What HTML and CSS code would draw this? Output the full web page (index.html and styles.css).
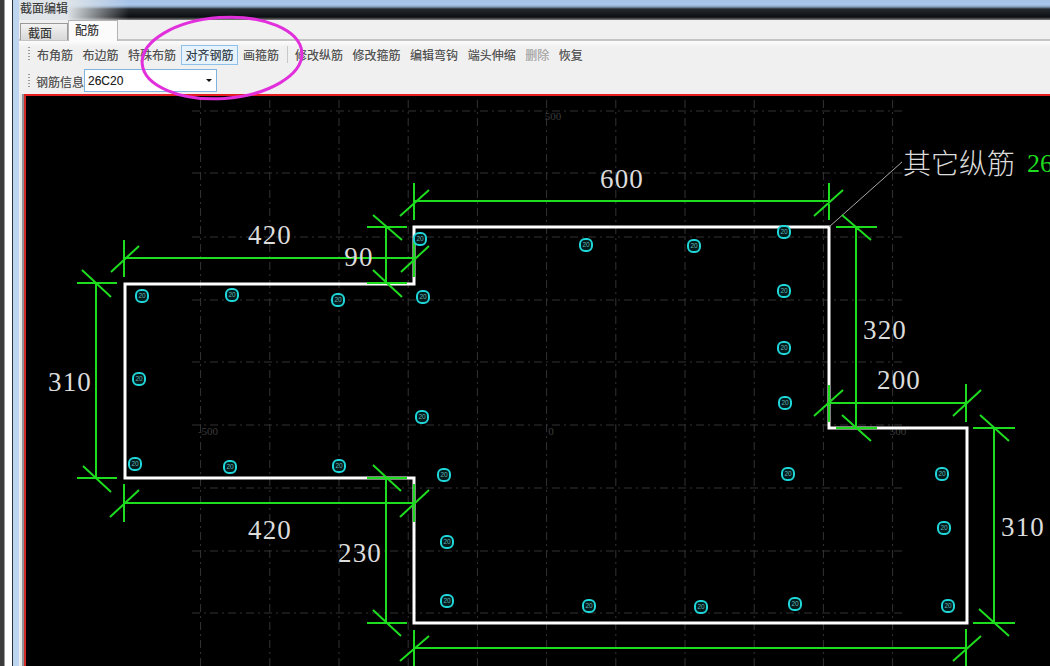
FILE: index.html
```html
<!DOCTYPE html>
<html lang="zh">
<head>
<meta charset="utf-8">
<title>截面编辑</title>
<link rel="stylesheet" href="styles.css">
</head>
<body>
<div class="desk"></div>
<main class="window">
  <header class="title">截面编辑</header>
  <nav class="tabs">
    <span class="tab">截面</span>
    <span class="tab tab-active">配筋</span>
  </nav>
  <div class="toolbar toolbar-main">
    <i class="grip"></i>
    <span class="tool">布角筋</span>
    <span class="tool">布边筋</span>
    <span class="tool">特殊布筋</span>
    <span class="tool tool-active">对齐钢筋</span>
    <span class="tool">画箍筋</span>
    <i class="sep"></i>
    <span class="tool">修改纵筋</span>
    <span class="tool">修改箍筋</span>
    <span class="tool">编辑弯钩</span>
    <span class="tool">端头伸缩</span>
    <span class="tool tool-off">删除</span>
    <span class="tool">恢复</span>
  </div>
  <div class="toolbar toolbar-info">
    <i class="grip"></i>
    <label class="info-label">钢筋信息</label>
    <div class="combo"><span>26C20</span><i class="arrow"></i></div>
  </div>
  <div class="canvas">
    <svg class="drawing" width="1024" height="570" viewBox="26 96 1024 570" xmlns="http://www.w3.org/2000/svg">
      <path class="grid" d="M200.6 100V666M269.8 100V666M339 100V666M408.2 100V666M477.4 100V666M546.6 100V666M615.8 100V666M685 100V666M754.2 100V666M823.4 100V666M892.6 100V666M192 111H902M192 173H902M192 237H902M192 300H902M192 362H902M192 425H902M192 488H902M192 551H902M192 613H902"/>
      <g class="grid-label">
        <text x="553" y="120" text-anchor="middle">500</text>
        <text x="208" y="435" text-anchor="middle">-500</text>
        <text x="551" y="435" text-anchor="middle">0</text>
        <text x="898" y="435" text-anchor="middle">500</text>
      </g>
      <path class="outline" d="M125 284H414V227H829V428H967V623H414V478H125Z"/>
      <path class="leader" d="M829 227L902 162"/>
      <path class="dim" d="M414 201H829M414 183V220M400 216L429 190M829 183V220M814 216L843 190
        M856 227V428M836 227H877M842 215L871 240M836 428H877M842 415L871 441
        M829 403H967M829 385V422M814 416L843 390M966 384V422M953 416L981 390
        M994 428V623M973 428H1015M980 415L1009 441M973 623H1015M979 609L1009 636
        M414 648H967M966 629V666M953 661L981 636M414 630V666M400 661L429 636
        M124 258H414M124 240V277M111 272L139 246M414 240V277M401 272L429 246
        M386 227V284M367 227H407M373 215L402 240M367 283H407M373 270L402 297
        M96 284V478M77 283H117M82 270L111 297M77 478H117M83 466L111 492
        M124 503H414M124 484V522M110 517L139 490M414 484V522M400 517L429 490
        M386 478V623M367 478H407M373 465L401 491M367 623H407M373 610L401 636"/>
      <g class="dim-text">
        <text x="622" y="188">600</text>
        <text x="270" y="244">420</text>
        <text x="359" y="266">90</text>
        <text x="70" y="391">310</text>
        <text x="885" y="339">320</text>
        <text x="899" y="389">200</text>
        <text x="1023" y="536">310</text>
        <text x="270" y="539">420</text>
        <text x="360" y="562">230</text>
      </g>
      <text class="note" x="903" y="174">其它纵筋</text>
      <text class="note-code" x="1027" y="172">26C20</text>
      <g class="bars">
        <g transform="translate(420 239)"><rect x="-6" y="-6" width="12" height="12" rx="5"/><text y="2">20</text></g>
        <g transform="translate(586 245)"><rect x="-6" y="-6" width="12" height="12" rx="5"/><text y="2">20</text></g>
        <g transform="translate(694 246)"><rect x="-6" y="-6" width="12" height="12" rx="5"/><text y="2">20</text></g>
        <g transform="translate(784 232)"><rect x="-6" y="-6" width="12" height="12" rx="5"/><text y="2">20</text></g>
        <g transform="translate(784 291)"><rect x="-6" y="-6" width="12" height="12" rx="5"/><text y="2">20</text></g>
        <g transform="translate(784 348)"><rect x="-6" y="-6" width="12" height="12" rx="5"/><text y="2">20</text></g>
        <g transform="translate(785 403)"><rect x="-6" y="-6" width="12" height="12" rx="5"/><text y="2">20</text></g>
        <g transform="translate(142 296)"><rect x="-6" y="-6" width="12" height="12" rx="5"/><text y="2">20</text></g>
        <g transform="translate(232 295)"><rect x="-6" y="-6" width="12" height="12" rx="5"/><text y="2">20</text></g>
        <g transform="translate(338 300)"><rect x="-6" y="-6" width="12" height="12" rx="5"/><text y="2">20</text></g>
        <g transform="translate(423 297)"><rect x="-6" y="-6" width="12" height="12" rx="5"/><text y="2">20</text></g>
        <g transform="translate(139 379)"><rect x="-6" y="-6" width="12" height="12" rx="5"/><text y="2">20</text></g>
        <g transform="translate(422 417)"><rect x="-6" y="-6" width="12" height="12" rx="5"/><text y="2">20</text></g>
        <g transform="translate(135 464)"><rect x="-6" y="-6" width="12" height="12" rx="5"/><text y="2">20</text></g>
        <g transform="translate(230 467)"><rect x="-6" y="-6" width="12" height="12" rx="5"/><text y="2">20</text></g>
        <g transform="translate(339 466)"><rect x="-6" y="-6" width="12" height="12" rx="5"/><text y="2">20</text></g>
        <g transform="translate(444 475)"><rect x="-6" y="-6" width="12" height="12" rx="5"/><text y="2">20</text></g>
        <g transform="translate(788 474)"><rect x="-6" y="-6" width="12" height="12" rx="5"/><text y="2">20</text></g>
        <g transform="translate(942 474)"><rect x="-6" y="-6" width="12" height="12" rx="5"/><text y="2">20</text></g>
        <g transform="translate(944 528)"><rect x="-6" y="-6" width="12" height="12" rx="5"/><text y="2">20</text></g>
        <g transform="translate(447 542)"><rect x="-6" y="-6" width="12" height="12" rx="5"/><text y="2">20</text></g>
        <g transform="translate(447 601)"><rect x="-6" y="-6" width="12" height="12" rx="5"/><text y="2">20</text></g>
        <g transform="translate(589 606)"><rect x="-6" y="-6" width="12" height="12" rx="5"/><text y="2">20</text></g>
        <g transform="translate(701 607)"><rect x="-6" y="-6" width="12" height="12" rx="5"/><text y="2">20</text></g>
        <g transform="translate(795 604)"><rect x="-6" y="-6" width="12" height="12" rx="5"/><text y="2">20</text></g>
        <g transform="translate(948 606)"><rect x="-6" y="-6" width="12" height="12" rx="5"/><text y="2">20</text></g>
      </g>
    </svg>
  </div>
</main>
<svg class="annotation" width="1050" height="666" viewBox="0 0 1050 666" xmlns="http://www.w3.org/2000/svg">
  <ellipse cx="222" cy="58" rx="80" ry="40.5" transform="rotate(-4 222 58)"/>
</svg>
</body>
</html>
```

FILE: styles.css
```css
* { box-sizing: border-box; }
html, body { margin: 0; height: 100%; }
body {
  position: relative;
  display: flex;
  width: 1050px;
  height: 666px;
  overflow: hidden;
  background: #fff;
  font-family: "Noto Sans CJK SC", "Liberation Sans", sans-serif;
  font-size: 12px;
  color: #4c4c4c;
}
.desk {
  flex: 0 0 13px;
  background: linear-gradient(90deg, #3b3b3b 0, #3b3b3b 4px, #fff 5px, #fff 12px, #2b2f36 12px);
}
.window {
  flex: 1;
  min-width: 0;
  display: flex;
  flex-direction: column;
  border-left: 6px solid #bed5ef;
  background: #f0f0f0;
}
.title {
  height: 20px;
  flex: none;
  padding-left: 1px;
  font-size: 12px;
  line-height: 16px;
  color: #3a3a3a;
  background:
    linear-gradient(90deg, #dfe4e8 0, #dfe4e8 48px, rgba(223,228,232,0) 110px),
    linear-gradient(180deg, #a6c3e6 0, #a9c7ea 5px, #7d97b4 7px, #262b30 9px, #0b0e11 17px, #555 19px, #8a8a8a 20px);
}
.title, .tab, .tool, .info-label, .combo span { text-shadow: 0 0 .6px rgba(120,120,120,.6); }
.tabs {
  height: 21px;
  flex: none;
  display: flex;
  align-items: flex-end;
  padding-left: 1px;
  border-bottom: 2px solid #c4c4c4;
}
.tab {
  width: 48px;
  height: 17px;
  margin-bottom: -1px;
  padding-left: 7px;
  line-height: 17px;
  color: #333;
  border: 1px solid #9a9a9a;
  border-bottom: 0;
  background: linear-gradient(180deg, #f2f2f2, #d8d8d8);
}
.tab-active {
  width: 50px;
  height: 21px;
  margin-bottom: -2px;
  padding-left: 6px;
  line-height: 18px;
  background: #fbfbfb;
  border-color: #b4b4b4;
}
.toolbar {
  flex: none;
  display: flex;
  align-items: center;
  padding-left: 9px;
}
.toolbar-main { height: 27px; background: linear-gradient(180deg, #fcfcfc, #f0f0f0 6px); }
.toolbar-info { height: 26px; }
.grip {
  width: 2px;
  height: 15px;
  margin-right: 2.25px;
  background: repeating-linear-gradient(180deg, #9a9a9a 0, #9a9a9a 1px, transparent 1px, transparent 3px);
}
.tool {
  height: 20px;
  padding: 0 3.75px;
  line-height: 18px;
  white-space: nowrap;
  border: 1px solid transparent;
}
.tool-active {
  color: #2d3a48;
  border-color: #8fc0ea;
  background: #e6f2fc;
}
.tool-off { color: #adadad; }
.sep {
  width: 1px;
  height: 17px;
  margin: 0 2.75px;
  background: #c8c8c8;
}
.info-label { margin-left: 3.75px; width: 48px; white-space: nowrap; }
.combo {
  width: 133px;
  height: 23px;
  display: flex;
  align-items: center;
  justify-content: space-between;
  padding: 0 4px 0 3px;
  margin-top: -1px;
  font-family: "Liberation Sans", sans-serif;
  font-size: 12px;
  color: #222;
  background: #fff;
  border: 1px solid #7fb4e2;
}
.arrow {
  width: 0;
  height: 0;
  border-left: 3px solid transparent;
  border-right: 3px solid transparent;
  border-top: 3px solid #111;
}
.canvas {
  flex: 1;
  min-height: 0;
  margin-left: 5px;
  background: #000;
  border-left: 2px solid #d42a2a;
  border-top: 2px solid #e62020;
  box-shadow: -2px 0 0 #8f9296, -4px 0 0 #e4e6e8;
  overflow: hidden;
}
.drawing { display: block; }
.grid {
  fill: none;
  stroke: #333;
  stroke-width: 1;
  stroke-dasharray: 8 4 2 4;
}
.grid-label {
  font-family: "Liberation Serif", serif;
  font-size: 11px;
  fill: #3c3c3c;
}
.outline {
  fill: none;
  stroke: #fff;
  stroke-width: 3;
}
.leader {
  fill: none;
  stroke: #a8a8a8;
  stroke-width: 1;
}
.dim {
  fill: none;
  stroke: #1edc1e;
  stroke-width: 2;
}
.dim-text {
  font-family: "Liberation Serif", serif;
  font-size: 27px;
  letter-spacing: 1.2px;
  text-anchor: middle;
  fill: #dcdcdc;
}
.note {
  font-family: "Noto Sans CJK SC", sans-serif;
  font-weight: 300;
  font-size: 28px;
  fill: #dcdcdc;
}
.note-code {
  font-family: "Liberation Serif", serif;
  font-size: 26px;
  fill: #1edc1e;
}
.bars rect {
  fill: #021a1c;
  stroke: #1fd6d8;
  stroke-width: 2;
}
.bars text {
  font-family: "Liberation Sans", sans-serif;
  font-size: 6.5px;
  text-anchor: middle;
  fill: #62b4b4;
}
.annotation {
  position: absolute;
  left: 0;
  top: 0;
  pointer-events: none;
}
.annotation ellipse {
  fill: none;
  stroke: #e12fdc;
  stroke-width: 3;
}
```
